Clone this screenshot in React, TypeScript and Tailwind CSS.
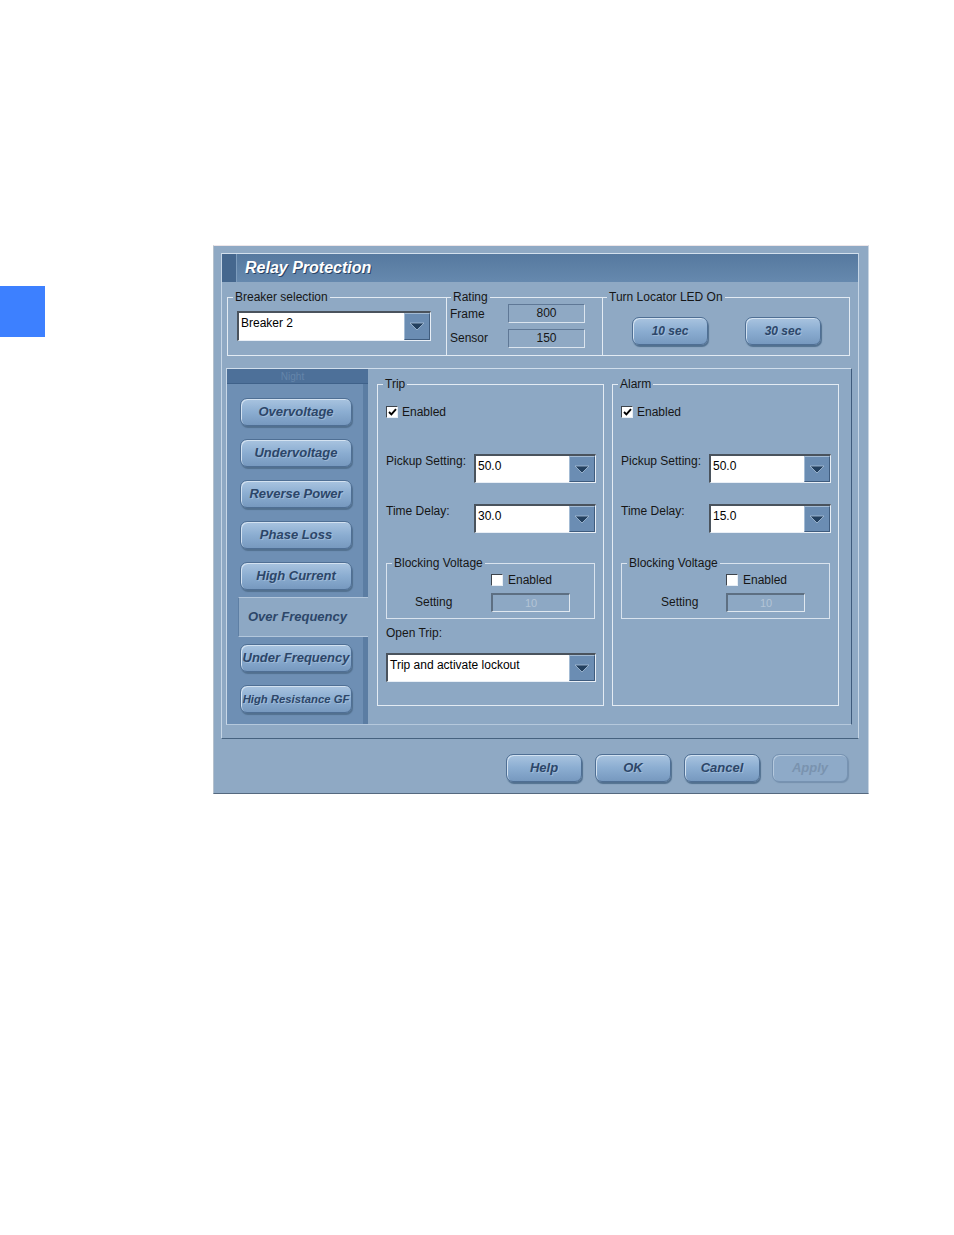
import React from 'react';

const navItems = [
  { label: 'Overvoltage', size: 'text-[13px]' },
  { label: 'Undervoltage', size: 'text-[13px]' },
  { label: 'Reverse Power', size: 'text-[13px]' },
  { label: 'Phase Loss', size: 'text-[13px]' },
  { label: 'High Current', size: 'text-[13px]' },
];

function Arrow() {
  return (
    <svg width="16" height="9" viewBox="0 0 16 9">
      <polygon points="1,1 15,1 8,8" fill="#23405f" stroke="#a9c0d8" strokeWidth="0.8" />
    </svg>
  );
}

function Combo({ value, width }: { value: string; width: string }) {
  return (
    <div
      className={`${width} flex h-[29px] shrink-0 border-t-2 border-l-2 border-r border-b border-t-[#4a535d] border-l-[#4a535d] border-r-[#e9eff6] border-b-[#e9eff6] bg-white`}
    >
      <span className="flex flex-1 items-center pb-[6px] pl-[2px] text-[12px] leading-[14px] text-black">{value}</span>
      <span className="flex h-full w-[26px] items-center justify-center border-t border-l border-r border-b border-t-[#a3bbd4] border-l-[#a3bbd4] border-r-[#3f5c7e] border-b-[#3f5c7e] bg-[#6b8db3]">
        <Arrow />
      </span>
    </div>
  );
}

function Check({ checked }: { checked?: boolean }) {
  return (
    <span className="flex h-[12px] w-[12px] shrink-0 items-center justify-center border border-t-[#3d444c] border-l-[#3d444c] border-r-[#e8eef5] border-b-[#e8eef5] bg-white">
      {checked && (
        <svg width="9" height="8" viewBox="0 0 9 8">
          <path d="M1 4 L3.4 6.4 L8 1.2" stroke="#000" strokeWidth="1.9" fill="none" />
        </svg>
      )}
    </span>
  );
}

function Btn({ children, disabled, width = 'w-[76px]', size = 'text-[13px]' }: { children: React.ReactNode; disabled?: boolean; width?: string; size?: string }) {
  return (
    <div
      className={`${width} ${size} flex h-[28px] shrink-0 items-center justify-center rounded-[7px] border font-bold italic ${
        disabled
          ? 'border-[#7793b2] bg-[#8eaac8] text-[#7a93af] shadow-[inset_1px_1px_0_#b5c9dd,1px_1px_1px_#7590ad]'
          : 'border-[#4f6f94] bg-gradient-to-b from-[#a9c4e0] via-[#8badd1] to-[#7799bf] text-[#2c4669] shadow-[inset_1px_1px_0_#d3e2f1,1px_2px_1px_#52708f] [text-shadow:1px_1px_0_rgba(210,225,240,0.35)]'
      }`}
    >
      {children}
    </div>
  );
}

function Field({ value, width }: { value: string; width: string }) {
  return (
    <div
      className={`${width} flex h-[19px] shrink-0 items-center justify-center border border-t-[#5f7896] border-l-[#5f7896] border-r-[#dbe5ef] border-b-[#dbe5ef] pb-[2px] text-[12px] leading-[14px]`}
    >
      {value}
    </div>
  );
}

function Blocking({ settingPad, labelWidth }: { settingPad: string; labelWidth: string }) {
  return (
    <fieldset className="ml-[8px] mt-[23px] h-[63px] w-[209px] border border-[#d9e3ee]">
      <legend className="ml-[5px] px-[2px] text-[12px] leading-[14px]">Blocking Voltage</legend>
      <div className="mt-[3px] flex h-[14px] items-center gap-[5px] pl-[104px]">
        <Check />
        <span className="text-[12px] leading-[14px]">Enabled</span>
      </div>
      <div className={`mt-[6px] flex items-center ${settingPad}`}>
        <span className={`${labelWidth} pb-[2px] text-[12px] leading-[14px]`}>Setting</span>
        <div className="flex h-[19px] w-[79px] items-center justify-center border-t-2 border-l-2 border-r border-b border-t-[#5d6f82] border-l-[#5d6f82] border-r-[#e0e8f0] border-b-[#e0e8f0] text-[11px] text-[#b3c4d6]">
          10
        </div>
      </div>
    </fieldset>
  );
}

function Group({ title, pickup, delay, trip }: { title: string; pickup: string; delay: string; trip?: boolean }) {
  return (
    <fieldset className="h-[329px] w-[227px] shrink-0 border border-[#e3ebf3]">
      <legend className="ml-[5px] px-[2px] text-[12px] leading-[14px]">{title}</legend>
      <div className="mt-[14px] flex h-[14px] items-center gap-[4px] pl-[8px]">
        <Check checked />
        <span className="text-[12px] leading-[14px]">Enabled</span>
      </div>
      <div className="mt-[35px] flex items-start pl-[8px]">
        <span className="w-[88px] text-[12px] leading-[14px]">Pickup Setting:</span>
        <Combo value={pickup} width="w-[122px]" />
      </div>
      <div className="mt-[21px] flex items-start pl-[8px]">
        <span className="w-[88px] text-[12px] leading-[14px]">Time Delay:</span>
        <Combo value={delay} width="w-[122px]" />
      </div>
      {trip ? (
        <>
          <Blocking settingPad="pl-[28px]" labelWidth="w-[76px]" />
          <div className="mt-[7px] pl-[8px] text-[12px] leading-[14px]">Open Trip:</div>
          <div className="ml-[8px] mt-[13px]">
            <Combo value="Trip and activate lockout" width="w-[210px]" />
          </div>
        </>
      ) : (
        <Blocking settingPad="pl-[39px]" labelWidth="w-[65px]" />
      )}
    </fieldset>
  );
}

export default function App() {
  return (
    <div className="min-h-[1235px] w-full bg-white font-['Liberation_Sans',Arial,sans-serif] text-[#161616]">
      <div className="flex items-start pt-[245px]">
        <div className="mt-[41px] h-[51px] w-[45px] shrink-0 bg-[#3d80ff]" />

        {/* Dialog */}
        <div className="ml-[168px] flex h-[549px] w-[656px] shrink-0 flex-col border border-t-[#ede6e9] border-l-[#b5c1cd] border-r-[#c9d5e2] border-b-[#55697f] bg-[#8fa9c4] pl-[7px] pr-[9px] pt-[7px]">
          <div className="flex h-[486px] w-[638px] flex-col border border-t-[#d3e0ed] border-l-[#c6d6e6] border-r-[#c6d6e6] border-b-[#46627f]">
            {/* Title bar */}
            <div className="flex h-[28px] items-center bg-gradient-to-b from-[#56799f] to-[#6689ae]">
              <div className="h-full w-[15px] border-r border-[#7d9cbd] bg-[#45678e]" />
              <span className="ml-[8px] text-[16px] font-bold italic text-white [text-shadow:1px_1px_0_#2b4566]">Relay Protection</span>
            </div>

            {/* Top groups */}
            <div className="ml-[5px] mt-[8px] flex">
              <fieldset className="h-[66px] w-[219px] border border-r-0 border-[#e3ebf3]">
                <legend className="ml-[5px] px-[2px] text-[12px] leading-[14px]">Breaker selection</legend>
                <div className="ml-[9px] mt-[7px]">
                  <div className="flex h-[30px] w-[194px] border-t-2 border-l-2 border-r border-b border-t-[#4a535d] border-l-[#4a535d] border-r-[#e9eff6] border-b-[#e9eff6] bg-white">
                    <span className="flex flex-1 items-center pb-[8px] pl-[2px] text-[12px] leading-[14px] text-black">Breaker 2</span>
                    <span className="flex h-full w-[26px] items-center justify-center border border-t-[#a3bbd4] border-l-[#a3bbd4] border-r-[#3f5c7e] border-b-[#3f5c7e] bg-[#6b8db3]">
                      <Arrow />
                    </span>
                  </div>
                </div>
              </fieldset>

              <fieldset className="h-[66px] w-[156px] border border-r-0 border-[#e3ebf3]">
                <legend className="ml-[4px] px-[2px] text-[12px] leading-[14px]">Rating</legend>
                <div className="flex items-center pl-[3px]">
                  <span className="w-[58px] text-[12px] leading-[14px]">Frame</span>
                  <Field value="800" width="w-[77px]" />
                </div>
                <div className="mt-[6px] flex items-center pl-[3px]">
                  <span className="w-[58px] pb-[2px] text-[12px] leading-[14px]">Sensor</span>
                  <Field value="150" width="w-[77px]" />
                </div>
              </fieldset>

              <fieldset className="h-[66px] w-[248px] border border-[#e3ebf3]">
                <legend className="ml-[4px] px-[2px] text-[12px] leading-[14px]">Turn Locator LED On</legend>
                <div className="mt-[13px] flex gap-[37px] pl-[29px]">
                  <Btn size="text-[12px]">10 sec</Btn>
                  <Btn size="text-[12px]">30 sec</Btn>
                </div>
              </fieldset>
            </div>

            {/* Lower section */}
            <div className="ml-[4px] mt-[12px] flex h-[357px] w-[626px] border border-t-[#d0deec] border-l-[#c9d8e8] border-r-[#3e5a7b] border-b-[#b5c8dc]">
              {/* Nav */}
              <nav className="flex w-[141px] shrink-0 flex-col bg-[linear-gradient(to_right,#6e8fb4_136px,#5b7da3_136px)]">
                <div className="flex h-[15px] items-center justify-center border-b border-[#3f6189] bg-[#4d7099] pr-[10px] text-[10px] text-[#6485aa]">
                  Night
                </div>
                <div className="flex flex-col gap-[13px] pl-[13px] pt-[14px]">
                  {navItems.map((item) => (
                    <Btn key={item.label} width="w-[112px]" size={item.size}>
                      {item.label}
                    </Btn>
                  ))}
                </div>
                <div className="ml-[11px] mt-[7px] flex h-[40px] items-center border-t border-b border-l border-t-[#b3c7dc] border-b-[#b3c7dc] border-l-[#5e7fa4] bg-[#8da8c4] pl-[9px] text-[13px] font-bold italic text-[#2c4669]">
                  Over Frequency
                </div>
                <div className="flex flex-col gap-[13px] pl-[13px] pt-[7px]">
                  <Btn width="w-[112px]">Under Frequency</Btn>
                  <Btn width="w-[112px]" size="text-[11.3px]">High Resistance GF</Btn>
                </div>
              </nav>

              {/* Content */}
              <div className="flex flex-1 gap-[8px] bg-[#8da8c4] pl-[9px] pt-[8px]">
                <Group title="Trip" pickup="50.0" delay="30.0" trip />
                <Group title="Alarm" pickup="50.0" delay="15.0" />
              </div>
            </div>
          </div>

          {/* Dialog buttons */}
          <div className="mt-[15px] flex pl-[285px]">
            <Btn>Help</Btn>
            <div className="ml-[13px]">
              <Btn>OK</Btn>
            </div>
            <div className="ml-[13px]">
              <Btn>Cancel</Btn>
            </div>
            <div className="ml-[12px]">
              <Btn disabled>Apply</Btn>
            </div>
          </div>
        </div>
      </div>
    </div>
  );
}
